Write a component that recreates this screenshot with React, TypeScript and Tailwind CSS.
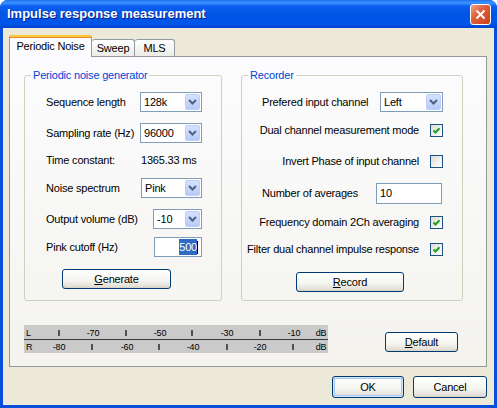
import React from 'react';

const Chevron = () => (
  <svg width="9" height="6" viewBox="0 0 9 6">
    <path d="M1 1 L4.5 4.5 L8 1" fill="none" stroke="#4d6185" strokeWidth="2" />
  </svg>
);

const Select: React.FC<{ value: string; className: string }> = ({ value, className }) => (
  <div className={`flex h-[20px] items-stretch border border-[#7f9db9] bg-white p-px ${className}`}>
    <span className="flex flex-1 items-center pl-[2px]">{value}</span>
    <div className="flex w-[15px] items-center justify-center rounded-[2px] border border-[#bccdf7] bg-[linear-gradient(to_bottom,#d6e2fd,#b7cbf8)]">
      <Chevron />
    </div>
  </div>
);

const Check: React.FC<{ checked?: boolean }> = ({ checked }) => (
  <div className="flex h-[13px] w-[13px] shrink-0 items-center justify-center border border-[#1c5180] bg-[linear-gradient(135deg,#dcdcd7,#ffffff)]">
    {checked && (
      <svg width="9" height="9" viewBox="0 0 9 9">
        <path d="M1.5 4.5 L3.5 6.5 L7.5 2.2" fill="none" stroke="#21a121" strokeWidth="2" />
      </svg>
    )}
  </div>
);

const XpButton: React.FC<{ children: React.ReactNode; className?: string; primary?: boolean }> = ({
  children,
  className = '',
  primary,
}) => (
  <div
    className={`flex items-center justify-center rounded-[3px] border border-[#003c74] bg-[linear-gradient(to_bottom,#ffffff,#f4f4f0_60%,#e3e0d6_90%,#d6d0c5)] ${
      primary ? 'shadow-[inset_0_0_0_1px_#cee7ff,inset_0_0_0_2px_#a9c6f0]' : ''
    } ${className}`}
  >
    {children}
  </div>
);

const CheckRow: React.FC<{ label: string; checked?: boolean; className: string }> = ({ label, checked, className }) => (
  <div className={`flex h-[13px] min-w-0 items-center justify-end gap-[11px] ${className}`}>
    <span className="whitespace-nowrap">{label}</span>
    <Check checked={checked} />
  </div>
);

const Meter = () => {
  const top: [string, number][] = [['-70', 69], ['-50', 136], ['-30', 203], ['-10', 270]];
  const topTicks = [35, 102, 168, 236];
  const bottom: [string, number][] = [['-80', 35], ['-60', 103], ['-40', 169], ['-20', 236]];
  const bottomTicks = [68, 135, 203, 269];
  return (
    <svg width="304" height="28" viewBox="0 0 304 28" className="shrink-0">
      <rect x="0" y="0" width="304" height="28" fill="#cacaca" />
      <line x1="0" y1="14.5" x2="304" y2="14.5" stroke="#3a3a3a" strokeWidth="1" />
      <g fontFamily="'Liberation Sans', Arial, sans-serif" fontSize="9" fill="#000">
        <text x="2" y="11">L</text>
        <text x="2" y="25">R</text>
        {top.map(([t, x]) => (
          <text key={t} x={x} y="11" textAnchor="middle">{t}</text>
        ))}
        {bottom.map(([t, x]) => (
          <text key={t} x={x} y="25" textAnchor="middle">{t}</text>
        ))}
        <text x="297" y="11" textAnchor="middle">dB</text>
        <text x="297" y="25" textAnchor="middle">dB</text>
      </g>
      {topTicks.map(x => (
        <line key={x} x1={x} y1="5" x2={x} y2="11" stroke="#000" strokeWidth="1.2" />
      ))}
      {bottomTicks.map(x => (
        <line key={x} x1={x} y1="19" x2={x} y2="25" stroke="#000" strokeWidth="1.2" />
      ))}
    </svg>
  );
};

export default function App() {
  return (
    <div className="flex h-[408px] w-[497px] flex-col overflow-hidden rounded-t-[8px] bg-[#0a4fdc] font-['Liberation_Sans',Arial,sans-serif] text-[11px] tracking-[-0.2px] text-black">
      {/* title bar */}
      <div className="flex h-[28px] shrink-0 items-center justify-between bg-[linear-gradient(to_bottom,#1c6ef5_0%,#3d95ff_10%,#0a5ff0_22%,#0054e3_55%,#0056ea_85%,#0043cf_100%)] pl-[7px] pr-[6px]">
        <span className="text-[13px] font-bold tracking-normal text-white [text-shadow:1px_1px_0_#0a1e8a]">
          Impulse response measurement
        </span>
        <div className="flex h-[21px] w-[21px] items-center justify-center rounded-[3px] border border-white bg-[linear-gradient(135deg,#f0a48a,#e0603e_40%,#c8421f)]">
          <svg width="11" height="11" viewBox="0 0 11 11">
            <path d="M1.5 1.5 L9.5 9.5 M9.5 1.5 L1.5 9.5" stroke="#fff" strokeWidth="2" />
          </svg>
        </div>
      </div>

      {/* client area */}
      <div className="mx-[3px] mb-[3px] flex flex-1 flex-col bg-[#ece9d8] pl-[6px] pt-[7px]">
        <div className="relative z-10 flex h-[21px] items-end">
          <div className="-mb-px flex h-[22px] w-[83px] flex-col rounded-t-[3px] border border-b-0 border-[#919b9c] bg-[#fcfcfe]">
            <div className="-mx-px -mt-px h-[3px] rounded-t-[3px] border-b border-[#e68b2c] bg-[#ffc73c]" />
            <span className="flex flex-1 items-center justify-center pb-[2px]">Periodic Noise</span>
          </div>
          <div className="flex h-[17px] w-[43px] items-center justify-center rounded-t-[3px] border border-b-0 border-l-0 border-[#919b9c] bg-[linear-gradient(to_bottom,#ffffff,#ecebe6)] pt-px">
            Sweep
          </div>
          <div className="flex h-[17px] w-[40px] items-center justify-center rounded-t-[3px] border border-b-0 border-l-0 border-[#919b9c] bg-[linear-gradient(to_bottom,#ffffff,#ecebe6)] pt-px">
            MLS
          </div>
        </div>

        <div className="flex h-[311px] w-[478px] flex-col border border-[#919b9c] bg-[linear-gradient(to_bottom,#fcfcfe,#f4f3ee)] pl-[14px] pt-[12px]">
          <div className="flex gap-[19px]">
            {/* left group */}
            <fieldset className="h-[232px] w-[198px] min-w-0 rounded-[3px] border border-[#d0d0bf]">
              <legend className="ml-[6px] px-[2px] leading-[13px] text-[#0046d5]">Periodic noise generator</legend>
              <div className="pl-[21px] pr-[19px]">
                <div className="mt-[10px] flex h-[20px] items-center justify-between">
                  <span>Sequence length</span>
                  <Select value="128k" className="w-[62px]" />
                </div>
                <div className="mt-[11px] flex h-[20px] items-center justify-between">
                  <span>Sampling rate (Hz)</span>
                  <Select value="96000" className="w-[62px]" />
                </div>
                <div className="mt-[7px] flex h-[20px] items-center">
                  <span className="w-[95px]">Time constant:</span>
                  <span>1365.33 ms</span>
                </div>
                <div className="mt-[8px] flex h-[20px] items-center justify-between">
                  <span>Noise spectrum</span>
                  <Select value="Pink" className="w-[61px]" />
                </div>
                <div className="mt-[11px] flex h-[20px] items-center justify-between">
                  <span>Output volume (dB)</span>
                  <Select value="-10" className="w-[49px]" />
                </div>
                <div className="mt-[8px] flex h-[20px] items-center justify-between">
                  <span>Pink cutoff (Hz)</span>
                  <div className="flex h-[20px] w-[48px] items-center justify-end border border-[#7f9db9] bg-white pr-[3px]">
                    <span className="bg-[#316ac5] text-white">500</span>
                    <span className="h-[13px] w-px bg-black" />
                  </div>
                </div>
                <XpButton className="ml-[16px] mt-[12px] h-[20px] w-[109px]">
                  <span>
                    <span className="underline">G</span>enerate
                  </span>
                </XpButton>
              </div>
            </fieldset>

            {/* right group */}
            <fieldset className="h-[232px] w-[222px] min-w-0 rounded-[3px] border border-[#d0d0bf]">
              <legend className="ml-[6px] px-[2px] leading-[13px] text-[#0046d5]">Recorder</legend>
              <div className="w-[220px] pl-[20px] pr-[19px]">
                <div className="mt-[10px] flex h-[20px] items-center justify-between">
                  <span>Prefered input channel</span>
                  <Select value="Left" className="w-[63px]" />
                </div>
                <CheckRow label="Dual channel measurement mode" checked className="mt-[12px]" />
                <CheckRow label="Invert Phase of input channel" className="mt-[18px]" />
                <div className="mt-[15px] flex h-[21px] items-center justify-between pr-px">
                  <span>Number of averages</span>
                  <div className="flex h-[21px] w-[66px] items-center border border-[#7f9db9] bg-white pl-[3px]">10</div>
                </div>
                <CheckRow label="Frequency domain 2Ch averaging" checked className="mt-[12px]" />
                <CheckRow label="Filter dual channel impulse response" checked className="mt-[14px]" />
                <XpButton className="ml-[34px] mt-[16px] h-[20px] w-[108px]">
                  <span>
                    <span className="underline">R</span>ecord
                  </span>
                </XpButton>
              </div>
            </fieldset>
          </div>

          <div className="mt-[24px] flex items-start">
            <Meter />
            <XpButton className="ml-[57px] mt-[7px] h-[20px] w-[73px]">
              <span>
                <span className="underline">D</span>efault
              </span>
            </XpButton>
          </div>
        </div>

        <div className="mt-[9px] flex justify-end gap-[9px] pr-[7px]">
          <XpButton primary className="h-[22px] w-[72px]">OK</XpButton>
          <XpButton className="h-[22px] w-[74px]">Cancel</XpButton>
        </div>
      </div>
    </div>
  );
}
